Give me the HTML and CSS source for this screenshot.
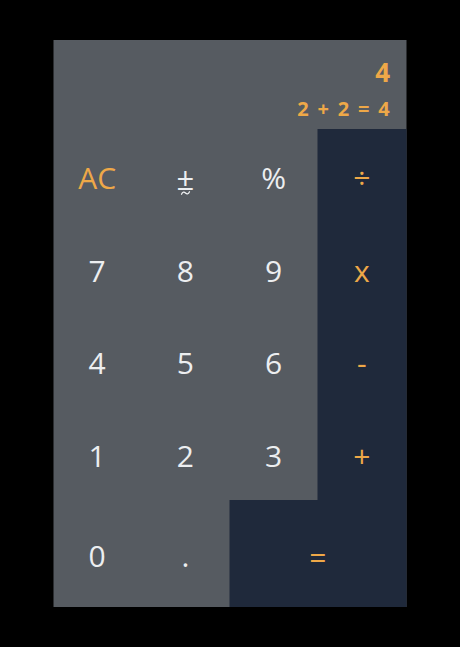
FILE: index.html
```html
<!DOCTYPE html>
<html>
<head>
<meta charset="utf-8">
<link rel="stylesheet" href="styles.css">
</head>
<body>
<div class="calc">
  <div class="display">
    <div class="result">4</div>
    <div class="expr">2 + 2 = 4</div>
  </div>
  <div class="key accent">AC</div>
  <div class="key"><span class="pm"><span class="pm-sign">±</span><svg class="pm-tilde" width="10" height="6" viewBox="0 0 10 6"><path d="M1 4.2 C2.2 1.6 3.8 1.6 5 3 C6.2 4.4 7.8 4.4 9 1.8" fill="none" stroke="#eceef0" stroke-width="1.3" stroke-linecap="round"/></svg></span></div>
  <div class="key">%</div>
  <div class="key op">÷</div>
  <div class="key">7</div>
  <div class="key">8</div>
  <div class="key">9</div>
  <div class="key op">x</div>
  <div class="key">4</div>
  <div class="key">5</div>
  <div class="key">6</div>
  <div class="key op">-</div>
  <div class="key">1</div>
  <div class="key">2</div>
  <div class="key">3</div>
  <div class="key op">+</div>
  <div class="key">0</div>
  <div class="key">.</div>
  <div class="key op equals">=</div>
</div>
</body>
</html>
```
FILE: styles.css
```css
html, body {
  margin: 0;
  padding: 0;
  background: #000;
}
body {
  padding-top: 40px;
  font-family: "Open Sans", "Noto Sans", sans-serif;
}
.calc {
  width: 353px;
  margin: 0 auto;
  transform: translateX(-0.5px);
  display: grid;
  grid-template-columns: repeat(4, 1fr);
  grid-template-rows: 89px repeat(4, 92.75px) 107px;
  background: #565b61;
}
.display {
  grid-column: 1 / span 4;
  display: flex;
  flex-direction: column;
  align-items: flex-end;
  padding: 16px 16px 0 0;
  color: #eea848;
  font-weight: 700;
}
.result {
  font-size: 26px;
  line-height: 32px;
}
.expr {
  font-size: 20px;
  line-height: 26px;
  margin-top: 8px;
  word-spacing: 3px;
  letter-spacing: 0.3px;
}
.key {
  display: flex;
  align-items: center;
  justify-content: center;
  color: #eceef0;
  font-size: 30px;
  font-weight: 400;
  padding-top: 4px;
}
.accent {
  color: #eea848;
}
.op {
  background: #1f293b;
  color: #eea848;
}
.equals {
  grid-column: 3 / span 2;
  padding-top: 6px;
}
.pm {
  display: inline-flex;
  flex-direction: column;
  align-items: center;
  margin-top: 8px;
}
.pm-sign {
  font-size: 31px;
  line-height: 24px;
}
.pm-tilde {
  display: block;
  margin-top: 0;
}
```
